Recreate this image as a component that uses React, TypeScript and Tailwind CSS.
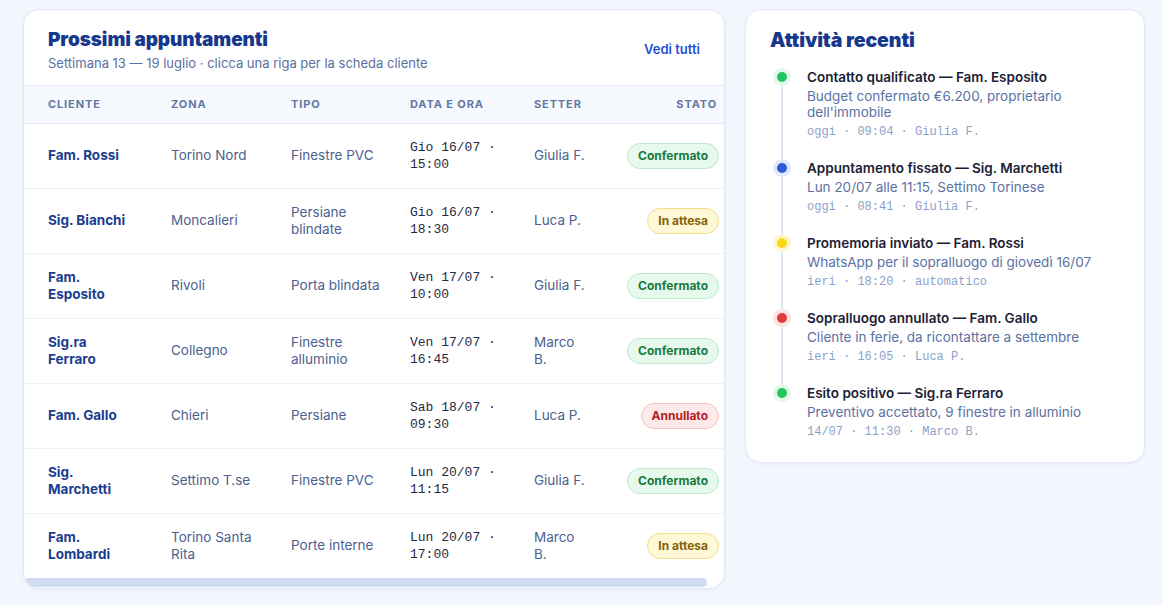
import React from "react";

type Status = "Confermato" | "In attesa" | "Annullato";

const appointments: {
  client: string;
  zone: string;
  type: string;
  date: string;
  setter: string;
  status: Status;
}[] = [
  { client: "Fam. Rossi", zone: "Torino Nord", type: "Finestre PVC", date: "Gio 16/07 · 15:00", setter: "Giulia F.", status: "Confermato" },
  { client: "Sig. Bianchi", zone: "Moncalieri", type: "Persiane blindate", date: "Gio 16/07 · 18:30", setter: "Luca P.", status: "In attesa" },
  { client: "Fam. Esposito", zone: "Rivoli", type: "Porta blindata", date: "Ven 17/07 · 10:00", setter: "Giulia F.", status: "Confermato" },
  { client: "Sig.ra Ferraro", zone: "Collegno", type: "Finestre alluminio", date: "Ven 17/07 · 16:45", setter: "Marco B.", status: "Confermato" },
  { client: "Fam. Gallo", zone: "Chieri", type: "Persiane", date: "Sab 18/07 · 09:30", setter: "Luca P.", status: "Annullato" },
  { client: "Sig. Marchetti", zone: "Settimo T.se", type: "Finestre PVC", date: "Lun 20/07 · 11:15", setter: "Giulia F.", status: "Confermato" },
  { client: "Fam. Lombardi", zone: "Torino Santa Rita", type: "Porte interne", date: "Lun 20/07 · 17:00", setter: "Marco B.", status: "In attesa" },
];

const activities = [
  { dot: "bg-[#22c55e]", halo: "bg-[#e3f8ea]", title: "Contatto qualificato — Fam. Esposito", desc: "Budget confermato €6.200, proprietario dell'immobile", meta: "oggi · 09:04 · Giulia F." },
  { dot: "bg-[#2f5bd6]", halo: "bg-[#e1e9fb]", title: "Appuntamento fissato — Sig. Marchetti", desc: "Lun 20/07 alle 11:15, Settimo Torinese", meta: "oggi · 08:41 · Giulia F." },
  { dot: "bg-[#fad812]", halo: "bg-[#fdf6cf]", title: "Promemoria inviato — Fam. Rossi", desc: "WhatsApp per il sopralluogo di giovedì 16/07", meta: "ieri · 18:20 · automatico" },
  { dot: "bg-[#e23c3c]", halo: "bg-[#fbe3e3]", title: "Sopralluogo annullato — Fam. Gallo", desc: "Cliente in ferie, da ricontattare a settembre", meta: "ieri · 16:05 · Luca P." },
  { dot: "bg-[#22c55e]", halo: "bg-[#e3f8ea]", title: "Esito positivo — Sig.ra Ferraro", desc: "Preventivo accettato, 9 finestre in alluminio", meta: "14/07 · 11:30 · Marco B." },
];

const badgeStyles: Record<Status, string> = {
  Confermato: "bg-[#e7f8ed] border-[#bfe9cd] text-[#177a3c]",
  "In attesa": "bg-[#fef8d6] border-[#f3df86] text-[#84610a]",
  Annullato: "bg-[#fde9e9] border-[#f6c4c4] text-[#b3201f]",
};

const App = () => {
  return (
    <div className="min-h-[605px] w-full bg-[#f2f6fd] pl-[23px] pr-[17px] pt-[9px] font-['Inter',sans-serif]">
      <div className="grid grid-cols-[702px_400px] items-start gap-5">
        <Appointments />
        <Activity />
      </div>
    </div>
  );
};

export default App;

const Appointments = () => {
  return (
    <div className="overflow-hidden rounded-2xl border border-[#e2e9f5] bg-white shadow-[0_1px_3px_rgba(30,58,138,0.06)]">
      <div className="flex items-center justify-between border-b border-[#e3eaf6] px-6 pb-[13px] pt-[18px]">
        <div>
          <h2 className="text-[19px] font-black leading-6 tracking-[-0.005em] text-[#16388c]">
            Prossimi appuntamenti
          </h2>
          <p className="mt-[2px] text-[13px] leading-[18px] text-[#5b70a0]">
            Settimana 13 — 19 luglio · clicca una riga per la scheda cliente
          </p>
        </div>
        <a className="text-[13px] font-semibold text-[#1f4fd6]">Vedi tutti</a>
      </div>
      <div className="overflow-hidden">
        <table className="w-[717px] table-fixed border-collapse text-left">
          <colgroup>
            <col className="w-[135px]" />
            <col className="w-[120px]" />
            <col className="w-[119px]" />
            <col className="w-[124px]" />
            <col className="w-[78px]" />
            <col className="w-[141px]" />
          </colgroup>
          <thead>
            <tr className="h-[37px] border-b border-[#e3eaf6] bg-[#f6f9fe] text-[11px] font-bold uppercase tracking-[0.08em] text-[#6478a4]">
              <th className="pl-6 pr-3 font-bold">Cliente</th>
              <th className="px-3 font-bold">Zona</th>
              <th className="px-3 font-bold">Tipo</th>
              <th className="px-3 font-bold">Data e ora</th>
              <th className="px-3 font-bold">Setter</th>
              <th className="pl-3 pr-6 text-right font-bold">Stato</th>
            </tr>
          </thead>
          <tbody>
            {appointments.map((a, i) => (
              <tr
                key={i}
                className={`h-[65px] text-[13.5px] leading-[17px] ${i < appointments.length - 1 ? "border-b border-[#edf2fa]" : ""}`}
              >
                <td className="pl-6 pr-[28px] font-bold text-[#1b3d8f]">{a.client}</td>
                <td className="px-3 text-[#4c6190]">{a.zone}</td>
                <td className="px-3 text-[#4c6190]">{a.type}</td>
                <td className="px-3 font-['Liberation_Mono',monospace] text-[13px] text-[#1f2a44]">{a.date}</td>
                <td className="px-3 text-[#4c6190]">{a.setter}</td>
                <td className="pl-3 pr-[22px] text-right">
                  <span
                    className={`inline-block rounded-full border px-[10px] py-[4px] text-[12px] font-bold leading-4 ${badgeStyles[a.status]}`}
                  >
                    {a.status}
                  </span>
                </td>
              </tr>
            ))}
          </tbody>
        </table>
      </div>
      <div className="h-[10px]">
        <div className="h-[9px] w-[683px] rounded-full bg-[#cfdcf2]" />
      </div>
    </div>
  );
};

const Activity = () => {
  return (
    <div className="rounded-2xl border border-[#e2e9f5] bg-white px-6 pb-[22px] pt-[18px] shadow-[0_1px_3px_rgba(30,58,138,0.06)]">
      <h2 className="text-[19.5px] font-black leading-6 tracking-[-0.005em] text-[#16388c]">
        Attività recenti
      </h2>
      <ul className="mt-[16px]">
        {activities.map((a, i) => (
          <li key={i} className="relative flex gap-[13px]">
            {i < activities.length - 1 && (
              <span className="absolute bottom-[-9px] left-[11px] top-[9px] w-[2px] bg-[#dde6f5]" />
            )}
            <div className="relative flex h-[18px] w-6 shrink-0 items-center justify-center">
              <span className={`flex h-[18px] w-[18px] items-center justify-center rounded-full ${a.halo}`}>
                <span className={`h-[10px] w-[10px] rounded-full ${a.dot}`} />
              </span>
            </div>
            <div className={`min-w-0 ${i < activities.length - 1 ? "pb-[19px]" : ""}`}>
              <div className="text-[13.5px] font-semibold leading-[18px] text-[#1a2136]">{a.title}</div>
              <div className="mt-[2px] max-w-[290px] text-[13.5px] leading-4 text-[#5b71a2]">{a.desc}</div>
              <div className="mt-[4px] font-['Liberation_Mono',monospace] text-[12px] leading-4 text-[#8ca1c9]">{a.meta}</div>
            </div>
          </li>
        ))}
      </ul>
    </div>
  );
};
